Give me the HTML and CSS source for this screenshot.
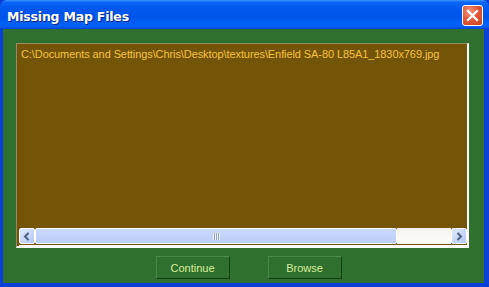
FILE: index.html
```html
<!DOCTYPE html>
<html lang="en">
<head>
    <meta charset="UTF-8">
    <title>Missing Map Files</title>
    <link rel="stylesheet" href="styles.css">
</head>
<body>

<div class="window">
    <div class="titlebar">
        <span class="title">Missing Map Files</span>
        <button class="close" type="button">
            <svg width="13" height="13" viewBox="0 0 13 13">
                <path d="M2 2 L11 11 M11 2 L2 11" stroke="#fff" stroke-width="2.2" stroke-linecap="square"/>
            </svg>
        </button>
    </div>

    <div class="client">
        <div class="listbox">
            <div class="list-items">
                <div class="item">C:\Documents and Settings\Chris\Desktop\textures\Enfield SA-80 L85A1_1830x769.jpg</div>
            </div>
            <div class="hscroll">
                <div class="sb-btn">
                    <svg width="8" height="9" viewBox="0 0 8 9"><path d="M5.5 1 L2 4.5 L5.5 8" fill="none" stroke="#4d6185" stroke-width="2"/></svg>
                </div>
                <div class="sb-thumb">
                    <span class="grip"></span>
                </div>
                <div class="sb-track"></div>
                <div class="sb-btn">
                    <svg width="8" height="9" viewBox="0 0 8 9"><path d="M2.5 1 L6 4.5 L2.5 8" fill="none" stroke="#4d6185" stroke-width="2"/></svg>
                </div>
            </div>
        </div>

        <div class="buttons">
            <button class="btn" type="button">Continue</button>
            <button class="btn" type="button">Browse</button>
        </div>
    </div>
</div>

</body>
</html>
```

FILE: styles.css
```css
body {
    margin: 0;
    background-color: #ffffff;
    font-family: "Liberation Sans", Arial, sans-serif;
}
.window {
    width: 489px;
    height: 287px;
    box-sizing: border-box;
    display: flex;
    flex-direction: column;
    background-color: #0a3fd8;
    padding: 0 5px 4px 3px;
}
.titlebar {
    height: 29px;
    margin: 0 -5px 0 -3px;
    padding: 0 6px 0 7px;
    display: flex;
    align-items: center;
    justify-content: space-between;
    border-radius: 7px 7px 0 0;
    background: linear-gradient(to bottom, #3d95ff 0%, #0a66f4 8%, #0058ee 30%, #0055ea 60%, #0062f8 85%, #0a5cf0 93%, #0341d8 100%);
}
.title {
    color: #ffffff;
    font-family: "DejaVu Sans", Verdana, sans-serif;
    font-weight: bold;
    font-size: 12.5px;
    letter-spacing: -0.2px;
    text-shadow: 1px 1px 0 #0a2a8a;
    padding-top: 4px;
}
.close {
    width: 21px;
    height: 21px;
    padding: 0;
    margin-top: 2px;
    border: 1px solid #ffffff;
    border-radius: 3px;
    background: radial-gradient(circle at 35% 30%, #f09a7e 0%, #e2583a 45%, #c8401f 100%);
    display: flex;
    align-items: center;
    justify-content: center;
}
.client {
    flex: 1;
    background-color: #2f702f;
    padding: 14px 15px 0 13px;
    display: flex;
    flex-direction: column;
}
.listbox {
    height: 205px;
    box-sizing: border-box;
    border-top: 1px solid #9a8a64;
    border-left: 1px solid #9a8a64;
    border-right: 2px solid #ffffff;
    border-bottom: 2px solid #ffffff;
    background-color: #745508;
    display: flex;
    flex-direction: column;
    padding: 1px 0 0 2px;
}
.list-items {
    flex: 1;
    padding: 3px 0 0 2px;
}
.item {
    color: #f2c23c;
    font-size: 11px;
    line-height: 13px;
    letter-spacing: -0.09px;
    white-space: nowrap;
}
.hscroll {
    height: 17px;
    display: flex;
    border-bottom: 1px solid #ffffff;
}
.sb-btn {
    width: 16px;
    height: 16px;
    box-sizing: border-box;
    border: 1px solid #ffffff;
    border-radius: 2px;
    background: linear-gradient(to bottom right, #dfe8fd, #b4c8f6);
    display: flex;
    align-items: center;
    justify-content: center;
}
.sb-thumb {
    width: 362px;
    height: 16px;
    box-sizing: border-box;
    border: 1px solid #ffffff;
    border-radius: 2px;
    background: linear-gradient(to bottom, #cad8fb, #bccdf7);
    display: flex;
    align-items: center;
    justify-content: center;
}
.grip {
    width: 7px;
    height: 7px;
    background: repeating-linear-gradient(to right, #eef3ff 0, #eef3ff 1px, #8fa5d8 1px, #8fa5d8 2px);
}
.sb-track {
    flex: 1;
    height: 16px;
    background: linear-gradient(to bottom, #f3f1ea, #fefefb);
}
.buttons {
    display: flex;
    justify-content: center;
    gap: 38px;
    padding: 8px 0 0 12px;
}
.btn {
    width: 74px;
    height: 23px;
    box-sizing: border-box;
    background-color: #2f702f;
    border-top: 1px solid #4a884a;
    border-left: 1px solid #4a884a;
    border-right: 1px solid #163d16;
    border-bottom: 1px solid #163d16;
    color: #d9ee9c;
    font-family: "Liberation Sans", Arial, sans-serif;
    font-size: 11px;
    padding: 0;
}
```
